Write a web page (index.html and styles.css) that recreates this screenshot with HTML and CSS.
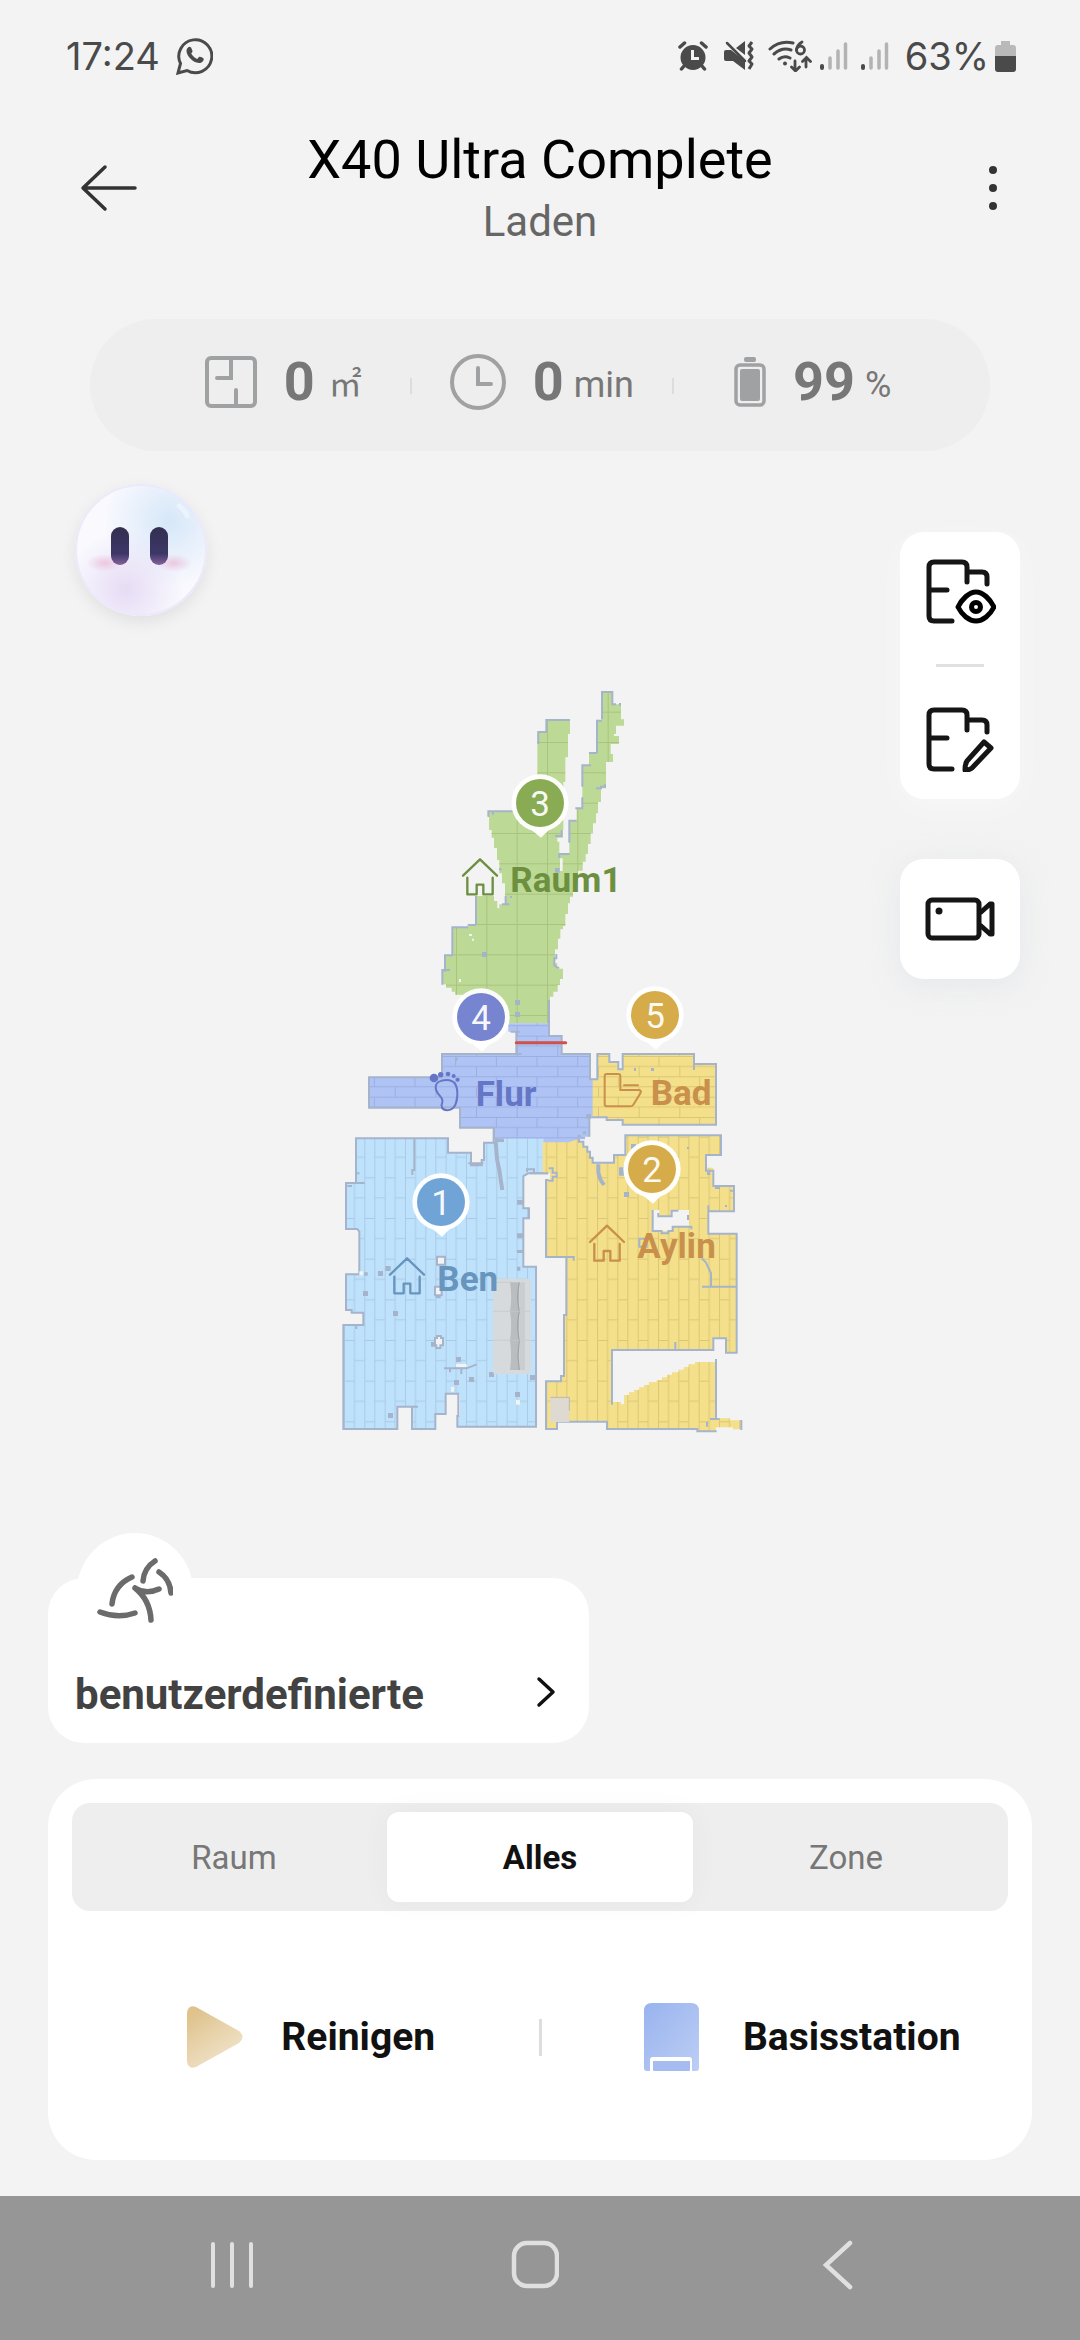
FILE: index.html
```
<!DOCTYPE html>
<html lang="de">
	<head>
		<meta charset="utf-8">
		<meta name="viewport" content="width=device-width">
		<title>X40 Ultra Complete</title>
		<link rel="stylesheet" href="styles.css">
	</head>
	<body>
		<div class="statusBar">
			<span class="time">17:24</span>
			<svg width="37" height="38" viewBox="0 0 37 38" fill="none" stroke="#4a4a4a" stroke-width="3">
				<path d="M2 36l2.500-9.500A16.500 16.500 0 1 1 11 33.500z"/>
				<path d="M12 10.500c1.500-1.500 3-.5 3.500 1l1 2.500c.3 1-.8 1.800-1.300 2.600 1.500 2.700 3.300 4.200 6 5.400l2-2.200c1.200-.7 4.300 1.300 4.500 2 .3 2.300-2.200 4.400-4.600 4.300C16.500 25.600 10.500 18.600 10.500 14c0-1.500.5-2.700 1.500-3.500z" fill="#4a4a4a" stroke="none"/>
			</svg>
			<div class="statusIcons">
				<svg width="30" height="30" viewBox="0 0 30 30">
					<circle cx="15" cy="16.500" r="12.500" fill="#4a4a4a"/>
					<path d="M2 6l4.500-4M28 6l-4.500-4M6 25l-2.500 3M24 25l2.500 3" stroke="#4a4a4a" stroke-width="3.500" stroke-linecap="round"/>
					<path d="M14.500 9v8.500H21" fill="none" stroke="#f3f3f3" stroke-width="3"/>
				</svg>
				<svg class="mute" width="32" height="30" viewBox="0 0 32 30" fill="#4a4a4a">
					<path d="M0 11q0-2 2-2h5l14 11v9L9 20H2q-2 0-2-2zM12 7l9-7v14z"/>
					<path d="M3 2l18 18" stroke="#4a4a4a" stroke-width="2.500" stroke-linecap="round"/>
					<path d="M28 1l-3 4 3 3-3 4 3 4-3 4 3 3-3 5" fill="none" stroke="#4a4a4a" stroke-width="3" stroke-linejoin="round"/>
				</svg>
				<svg class="wifi" width="44" height="32" viewBox="0 0 44 32" fill="none" stroke="#4a4a4a" stroke-width="3" stroke-linecap="round">
					<path d="M2 9Q12 0 25 3M6 14q8-7 17-4M11 19q5-4 11-1"/>
					<circle cx="17" cy="23.500" r="2" fill="#4a4a4a" stroke="none"/>
					<path d="M34 2q-5 3-5.500 8M27 21v9M23.500 27l4 4 4-4M38 27V18M34.500 21.500l4-4 4 4" stroke-width="2.800"/>
					<circle cx="32.500" cy="10" r="4" stroke-width="2.800"/>
				</svg>
				<svg class="signal" width="28" height="30" viewBox="0 0 28 30" stroke="#b3b3b3" stroke-width="4" stroke-linecap="round">
					<path d="M2 25v2" stroke="#4a4a4a"/><path d="M10 17v10M18 10v17M25.500 3v24" stroke-width="3.500"/>
				</svg>
				<svg class="signal second" width="28" height="30" viewBox="0 0 28 30" stroke="#b3b3b3" stroke-width="4" stroke-linecap="round">
					<path d="M2 25v2" stroke="#4a4a4a"/><path d="M10 17v10M18 10v17M25.500 3v24" stroke-width="3.500"/>
				</svg>
				<span class="percent">63%</span>
				<svg width="21" height="31" viewBox="0 0 21 31">
					<path d="M6 0h9v4h3q3 0 3 3v9H0V7q0-3 3-3h3z" fill="#b9b9b9"/>
					<path d="M0 15h21v13q0 3-3 3H3q-3 0-3-3z" fill="#4a4a4a"/>
				</svg>
			</div>
		</div>

		<header class="header">
			<button class="iconButton" aria-label="Zurück">
				<svg width="58" height="48" viewBox="0 0 58 48" fill="none" stroke="#333" stroke-width="3.500" stroke-linecap="round" stroke-linejoin="round">
					<path d="M25 3L3 24l22 21M3 24h52"/>
				</svg>
			</button>
			<div class="title">
				<h1>X40 Ultra Complete</h1>
				<p>Laden</p>
			</div>
			<button class="iconButton right" aria-label="Menü">
				<svg width="10" height="46" viewBox="0 0 10 46" fill="#333">
					<circle cx="5" cy="5" r="4"/><circle cx="5" cy="23" r="4"/><circle cx="5" cy="41" r="4"/>
				</svg>
			</button>
		</header>

		<div class="stats">
			<div class="stat">
				<svg width="52" height="52" viewBox="0 0 52 52" fill="none" stroke="#a0a1a3" stroke-width="4" stroke-linecap="round">
					<rect x="2" y="2" width="48" height="48" rx="4"/>
					<path d="M26 3v19H12M31 49V34"/>
				</svg>
				<b>0</b><span class="area">㎡</span>
			</div>
			<div class="line"></div>
			<div class="stat">
				<svg width="56" height="56" viewBox="0 0 56 56" fill="none" stroke="#a0a1a3" stroke-width="4" stroke-linecap="round">
					<circle cx="28" cy="28" r="26"/>
					<path d="M28 14v16h13"/>
				</svg>
				<b>0</b><span>min</span>
			</div>
			<div class="line"></div>
			<div class="stat battery">
				<svg width="32" height="50" viewBox="0 0 32 50">
					<rect x="10" width="12" height="5" rx="2" fill="#a0a1a3"/>
					<rect x="2" y="8" width="28" height="40" rx="4" fill="none" stroke="#a0a1a3" stroke-width="3.500"/>
					<rect x="6" y="12" width="20" height="32" rx="2" fill="#a0a1a3"/>
				</svg>
				<b>99</b><span>%</span>
			</div>
		</div>

		<main class="stage">
			<button class="avatar" aria-label="Assistent">
				<svg width="132" height="132" viewBox="0 0 132 132">
					<defs>
						<radialGradient id="sky" cx="72%" cy="28%" r="50%"><stop offset="0" stop-color="#d6e7f8"/><stop offset="1" stop-color="#d6e7f8" stop-opacity="0"/></radialGradient>
						<radialGradient id="lilac" cx="38%" cy="80%" r="45%"><stop offset="0" stop-color="#e6dcf5"/><stop offset="1" stop-color="#e6dcf5" stop-opacity="0"/></radialGradient>
						<radialGradient id="blush"><stop offset="0" stop-color="#ecc8e0"/><stop offset="1" stop-color="#ecc8e0" stop-opacity="0"/></radialGradient>
						<linearGradient id="eye" x2="0" y2="1"><stop offset="0" stop-color="#332f50"/><stop offset=".7" stop-color="#3d3768"/><stop offset="1" stop-color="#84629a"/></linearGradient>
					</defs>
					<circle cx="66" cy="66" r="66" fill="#f9f9fe"/>
					<circle cx="66" cy="66" r="65" fill="url(#sky)"/>
					<circle cx="66" cy="66" r="65" fill="url(#lilac)" stroke="#ebe9fa" stroke-width="2"/>
					<path d="M104 22q7 5 8 10" stroke="#fff" stroke-width="5" stroke-linecap="round" fill="none" opacity=".4"/>
					<ellipse cx="30" cy="79" rx="18" ry="9" fill="url(#blush)"/>
					<ellipse cx="99" cy="79" rx="18" ry="9" fill="url(#blush)"/>
					<rect x="36" y="43" width="18" height="38" rx="9" fill="url(#eye)"/>
					<rect x="75" y="43" width="18" height="38" rx="9" fill="url(#eye)"/>
				</svg>
			</button>

			<svg class="map" viewBox="0 0 1260 2280">
				<defs>
					<pattern id="tiles" width="91" height="91" patternUnits="userSpaceOnUse" x="17" y="34">
						<path d="M0 1.500h91M1.500 0v91" stroke="#aac37f" stroke-width="3"/>
					</pattern>
					<pattern id="planks" width="61" height="122" patternUnits="userSpaceOnUse" x="11" y="50">
						<path d="M1.500 0v122M31.500 0v122M0 1.500h31M31 62h30" stroke="#5d7590" stroke-opacity=".22" stroke-width="3"/>
					</pattern>
					<pattern id="planksYellow" width="61" height="122" patternUnits="userSpaceOnUse" x="18" y="50">
						<path d="M1.500 0v122M31.500 0v122M0 1.500h31M31 62h30" stroke="#d3c172" stroke-opacity=".8" stroke-width="3"/>
					</pattern>
					<pattern id="bricks" width="122" height="61" patternUnits="userSpaceOnUse" x="42" y="45">
						<path d="M0 1.500h122M0 31.500h122M1.500 31v30M61 0v31" stroke="#8f9fd5" stroke-opacity=".6" stroke-width="3"/>
					</pattern>
					<pattern id="bricksYellow" width="122" height="61" patternUnits="userSpaceOnUse" x="42" y="45">
						<path d="M0 1.500h122M0 31.500h122M1.500 31v30M61 0v31" stroke="#d3c172" stroke-opacity=".8" stroke-width="3"/>
					</pattern>
					<path id="raum" d="M204 423H290L352 400V186H378V150H450V192H444V262H436V336H430V480H428V503H412V515H418V551H448V452H470V415H487V286H507V249H531V150H546V66H577V103H603V148H612V167H588V192H582V198H597V222H572V252H579V276H558V355H543V396H534V430H528V460H519V490H512V522H504V552H497V575H488V602H474V640H459V680H450V700H444V732H436V768H429V778H421V806H414V838H405V880H412V896H429V927H420V945H413V965H400V980H390V1060H200V990H135V974H105V965H95V953H78V943H66V900H75V856H97V772H145V765H168V678H222V693H232V715H238V703H255V640H246V610H238V570H231V534H222V503H215V480H207V440H204Z"/>
					<path id="flur" d="M505 130H625V168H665V222H750V298H760V408H748V470H735V478H715L685 487H610V476H462V443H360V383H87V292H306V222H529V155H505Z"/>
					<path id="bad" d="M772 298V222H810V246H835V268H848V222H1062V252H1128V434H848V420H800V412H758V298Z"/>
					<path id="ben" d="M108 55H384V98H453V136H485V120H492V68H521V50H570V55H670V160H625L612 168V265H627V295H610V440H648V920H412V888H420V821H377V882H346V927H276V860H232V927H70V615H130V578H95V570H78V463H118V335L112 327H78V189H108Z"/>
					<path id="aylin" d="M38 66H112L130 52H147V65H160V80H172V95H180V113H188V128H252V105H286V46H573V105H528V143H550V198H612V274H535V341H620V698H588V655H550V690H246V846H273V853H282V825H297V817H312V810H327V802H342V795H357V786H380V780H396V772H411V764H426V757H446V749H461V741H476V733H495V726H558V895H600V901H636V928H609V922H558V934H502V927H231V905H81V927H48V784H93V768H102V585H109V411H48V180H60V158H38Z"/>
					<g id="house" fill="none" stroke-width="7" stroke-linecap="round" stroke-linejoin="round">
						<path d="M-51 49L0 0l51 49M-38 55v50h28V76h20v29h28V55"/>
					</g>
					<g id="pin">
						<path d="M-32 76L3 104 32 76z"/>
						<circle r="86"/>
					</g>
				</defs>

				<!-- Raum1 -->
				<g transform="translate(270 -30)">
					<use href="#raum" fill="#bcd995"/>
					<use href="#raum" fill="url(#tiles)"/>
					<path class="wall" d="M355 222V186H379V150H450M205 440V424H290M219 424v10M546 148V66H577V103H588M600 99v8M531 249V152H546M507 249H531M487 350V286H513M528 355H543V350H555V343M466 415H487V382M448 518V452H470M418 563V552H449M405 498H425V480M168 765V678M143 765H168M97 856V772H145M75 905V856H99M67 944V900H90M387 990V1060M409 852V865H403V886L412 893H418M246 703H268M257 703V678M237 598h8M270 681h6"/>
					<path class="speck" d="M186 846h15v15h-15zM285 990h15v15h-15zM285 1026h15v15h-15zM405 594h14v14h-14z"/>
					<path d="M420 565h8v38h-8zM147 792h9v6h-9zM156 806h6v6h-6zM117 927h6v9h-6z" fill="#f3f3f3"/>
				</g>

				<!-- Ben -->
				<g transform="translate(-30 1320)">
					<use href="#ben" fill="#bfe2fc"/>
					<use href="#ben" fill="url(#planks)"/>
					<path class="wall" d="M521 25V68H492V120H485V136H453V98H384V55H108V189H78V327H112L118 335V463H78V570H95V578H130V615H70V927H232V860H276V927H346V882H377V821H415V888H412V920H648V440H610V295H627V265H610V168L625 160H684M108 189H134M276 860H294M283 55V150H277V165M372 745H440L470 733M390 745V757M424 745V762M78 463H100M445 130H490M109 615v12M108 160h10M82 198h14M621 155V148H642V160"/>
					<path class="wall thick" d="M527 65L531 118L538 150L543 185L547 210M524 38L530 60H552"/>
					<path class="speck" d="M174 453h15v15h-15zM196 438h16v15h-16zM129 513h15v15h-15zM219 573h15v15h-15zM408 711h15v15h-15zM447 771h15v15h-15zM402 780h15v15h-15zM585 816h15v15h-15zM507 756h15v15h-15zM630 765h17v15h-17zM204 879h15v15h-15zM591 240h18v14h-18zM591 340h18v14h-18zM591 390h18v9h-18zM591 440h10v12h-10zM133 457h10v10h-10zM333 666h12v14h-12zM348 526h14v9h-14z"/>
					<path d="M351 410h24v24h-24zM345 500h20v26h-20zM351 648h12v6h6v22h-8v8h-12v-8h-4v-22h6z" fill="#f3f3f3" class="wall"/>
					<path d="M408 732h32v9h-32zM393 801h9v14h-9zM588 840h12v14h-12zM118 454h11v12h-11z" fill="#f3f3f3"/>
					<rect x="519" y="476" width="114" height="286" rx="6" fill="#d7dadc"/>
					<path d="M570 487H598V750H570Q576 705 570 662 577 615 570 574 577 530 570 487z" fill="#b9bdc0"/>
					<path d="M598 487q-10 45 0 87 -10 45 0 88 -9 45 0 88" fill="none" stroke="#9a9fa3" stroke-width="3"/>
					<path d="M519 574h112M519 661h112M522 487h76" stroke="#c4c8ca" stroke-width="2"/>
					<rect x="600" y="487" width="15" height="263" fill="#cbced0"/>
				</g>

				<!-- Aylin -->
				<g transform="translate(600 1320)">
					<use href="#aylin" fill="#f4e08a"/>
					<use href="#aylin" fill="url(#planksYellow)"/>
					<path class="wall" d="M147 55V65H160V80H172V95H180V113H188V128H252V105H286V46H573V105H528V152H550V198H612V274H535V256M535 274V341H620V698H588V655H550V690H246V854M436 690V666M558 717V896M540 897H568M634 900V930M560 934H502V927H231V905H81V927H48V784H93V768H102V585H109V411H48V180H56M109 411H131V422M516 500H620M543 500V460L528 428 516 415M555 204H570M600 212H612M0 160H55M56 145H68V158H80V170H68V182H56M531 905v15"/>
					<path class="wall thick" d="M205 133V158L212 180 222 195"/>
					<path class="speck" d="M282 216h15v15h-15zM303 72h15v15h-15zM267 142h15v25h-15zM471 81h6v6h-6zM585 255h6v6h-6zM531 155h10v10h-10z"/>
					<path d="M368 270H388V290H425V270H477V320H428V333H368z" fill="#f3f3f3"/>
					<path class="wall" d="M368 270V333H395V340H415V333H428V320H484V328M385 279V289H425V272H445M474 285V300M328 356h22v24h-22z"/>
					<rect x="61" y="832" width="57" height="74" fill="#dedad2"/>
					<path d="M61 832h57v40" fill="none" stroke="#bcb7ab" stroke-width="3"/>
				</g>

				<!-- Flur, Bad -->
				<g transform="translate(30 900)">
					<use href="#flur" fill="#afc4f5"/>
					<use href="#flur" fill="url(#bricks)"/>
					<use href="#bad" fill="#f4e08a"/>
					<use href="#bad" fill="url(#bricksYellow)"/>
					<path class="wall" d="M627 60V168H665V222H750V298H772V222H808V246H835V268H848V222H1062V270M1062 252H1128V434H848V420H800V412H748V470M540 155H512M529 155V222M545 222H306V292H87V383H360V443H462V476M350 232v10"/>
					<path class="speck" d="M933 264h9v9h-9zM882 264h6v9h-6zM729 454h9v9h-9zM713 464h9v9h-9zM738 402h15v14h-15z"/>
					<path d="M529 188H677" stroke="#cf5148" stroke-width="9" stroke-linecap="round"/>
				</g>

				<g class="label" fill="#6d8f40" stroke="#6d8f40" transform="translate(450 538)">
					<use href="#house"/><text x="91" y="97">Raum1</text>
				</g>
				<g class="label" fill="#6795bd" stroke="#6795bd" transform="translate(231 1735)">
					<use href="#house"/><text x="91" y="97">Ben</text>
				</g>
				<g class="label" fill="#c8904c" stroke="#c8904c" transform="translate(831 1637)">
					<use href="#house"/><text x="91" y="97">Aylin</text>
				</g>
				<g class="label" fill="#6676c7" stroke="#6676c7" transform="translate(30 900)">
					<path d="M320 300C345 300 353 318 352 345C352 365 345 390 322 391C304 390 302 378 307 366C312 352 288 345 287 322C287 307 302 300 320 300z" fill="none" stroke-width="6"/>
					<g stroke="none"><circle cx="282" cy="294" r="13"/><circle cx="302" cy="284" r="8"/><circle cx="324" cy="282" r="7"/><circle cx="341" cy="288" r="6"/><circle cx="353" cy="299" r="6"/></g>
					<text x="407" y="377">Flur</text>
				</g>
				<g class="label" fill="#c8904c" stroke="#c8904c" transform="translate(30 900)">
					<path d="M800 282H835Q841 282 841 288V330H897Q905 331 902 338L880 374Q877 379 870 379H800Q794 379 794 373V288Q794 282 800 282zM852 316H894" fill="none" stroke-width="6" stroke-linecap="round"/>
					<text x="932" y="375">Bad</text>
				</g>

				<g class="pin" transform="translate(630 369)"><use href="#pin"/><circle r="72" fill="#83a74b"/><text y="38">3</text></g>
				<g class="pin" transform="translate(453 1011)"><use href="#pin"/><circle r="72" fill="#707dcc"/><text y="38">4</text></g>
				<g class="pin" transform="translate(975 1005)"><use href="#pin"/><circle r="72" fill="#d4a63f"/><text y="38">5</text></g>
				<g class="pin" transform="translate(333 1566)"><use href="#pin"/><circle r="72" fill="#689fd5"/><text y="38">1</text></g>
				<g class="pin" transform="translate(966 1467)"><use href="#pin"/><circle r="72" fill="#d4a63f"/><text y="38">2</text></g>
			</svg>

			<div class="tools">
				<div class="toolGroup">
					<button aria-label="Karte anzeigen">
						<svg width="72" height="66" viewBox="0 0 72 66" fill="none" stroke="#151515" stroke-width="5" stroke-linecap="round" stroke-linejoin="round">
							<path d="M28 62H10q-5 0-5-5V8q0-5 5-5h28q5 0 5 5v15M43 13h15q5 0 5 5v7M6 31h17"/>
							<path d="M34 48C38 40 45 33 52 33S66 40 70 48C66 56 59 62 52 62S38 56 34 48z" stroke="#000"/>
							<circle cx="52" cy="48" r="4.500" stroke="#000"/>
						</svg>
					</button>
					<hr>
					<button aria-label="Karte bearbeiten">
						<svg width="72" height="66" viewBox="0 0 72 66" fill="none" stroke="#151515" stroke-width="5" stroke-linecap="round" stroke-linejoin="round">
							<path d="M28 63H10q-5 0-5-5V9q0-5 5-5h28q5 0 5 5v15M43 14h15q5 0 5 5v7M6 32h17"/>
							<path d="M60 36l7 6-19 20q-2 2-7 2 0-6 2-9z"/>
						</svg>
					</button>
				</div>
				<div class="toolGroup camera">
					<button aria-label="Kamera">
						<svg width="70" height="44" viewBox="0 0 70 44" fill="none" stroke="#151515" stroke-width="5" stroke-linejoin="round">
							<rect x="3" y="3" width="51" height="38" rx="4"/>
							<path d="M55 16l10-9h2v30h-2l-10-9"/>
							<circle cx="14" cy="14" r="3.500" fill="#151515" stroke="none"/>
						</svg>
					</button>
				</div>
			</div>
		</main>

		<button class="mode">
			<span class="modeIcon">
				<svg width="76" height="66" viewBox="0 0 76 66" fill="none" stroke="#6b6b6b" stroke-width="5.500" stroke-linecap="round">
					<path d="M35 19Q17 27 15 46M3 54q18 7 35 1M58 3Q47 10 46 23M62 14q11 7 12 21M38 30q11 7 24 1M38 30q15 12 16 32"/>
				</svg>
			</span>
			<span>benutzerdefinierte</span>
			<svg width="20" height="32" viewBox="0 0 20 32" fill="none" stroke="#111" stroke-width="3.500" stroke-linecap="round" stroke-linejoin="round">
				<path d="M3 3l14 13L3 29"/>
			</svg>
		</button>

		<section class="panel">
			<div class="tabs">
				<button>Raum</button>
				<button class="active">Alles</button>
				<button>Zone</button>
			</div>
			<div class="actions">
				<button class="clean">
					<svg width="56" height="62" viewBox="0 0 56 62">
						<defs><linearGradient id="gold" x1=".1" y1=".1" x2=".6" y2=".9"><stop offset="0" stop-color="#dfc28c"/><stop offset="1" stop-color="#efe1c6"/></linearGradient></defs>
						<path d="M0 7Q1-2 9 1L52 25q7 6 0 12L9 61Q1 64 0 55z" fill="url(#gold)"/>
					</svg>
					Reinigen
				</button>
				<div class="actionLine"></div>
				<button class="dock">
					<svg width="56" height="68" viewBox="0 0 56 68">
						<defs><linearGradient id="dock" x2="1" y2="1"><stop offset="0" stop-color="#98b3ee"/><stop offset="1" stop-color="#bdcef5"/></linearGradient></defs>
						<path d="M1 8q0-8 8-8h39q8 0 8 8v57q0 3-3 3H4q-3 0-3-3z" fill="url(#dock)"/>
						<path d="M7 68V57q0-3 3-3h36q3 0 3 3v11z" fill="#fff"/>
						<path d="M10 67v-9h37v9q0 1-1 1H11q-1 0-1-1z" fill="#a6bcf0"/>
					</svg>
					Basisstation
				</button>
			</div>
		</section>

		<nav class="navBar">
			<button aria-label="Letzte Apps">
				<svg width="48" height="52" viewBox="0 0 48 52" stroke="#e0e0e0" stroke-width="4" stroke-linecap="round"><path d="M5 5v42M24 5v42M43 5v42"/></svg>
			</button>
			<button aria-label="Startseite">
				<svg width="48" height="52" viewBox="0 0 48 52" fill="none" stroke="#e0e0e0" stroke-width="4.500"><rect x="3" y="4" width="43" height="43" rx="13"/></svg>
			</button>
			<button aria-label="Zurück">
				<svg width="48" height="52" viewBox="0 0 48 52" fill="none" stroke="#e0e0e0" stroke-width="4.500" stroke-linecap="round"><path d="M36 4L12 26l24 22"/></svg>
			</button>
		</nav>
	</body>
</html>
```
FILE: styles.css
```
* {
	box-sizing: border-box;
}

body {
	margin: 0;
	min-height: 100vh;
	display: flex;
	flex-direction: column;
	background: #f3f3f3;
	color: #111;
	font-family: Roboto, "Noto Sans CJK SC", sans-serif;
}

button {
	margin: 0;
	padding: 0;
	border: 0;
	background: none;
	color: inherit;
	font: inherit;
}

svg {
	display: block;
	flex: none;
}

.statusBar {
	display: flex;
	align-items: center;
	gap: 16px;
	height: 112px;
	padding: 0 64px 0 66px;
	color: #4a4a4a;
	font-family: Inter, sans-serif;
	font-size: 38px;
}

.statusIcons {
	display: flex;
	align-items: center;
	margin-left: auto;
}

.mute {
	margin-left: 16px;
}

.wifi {
	margin-left: 12px;
}

.signal {
	margin-left: 8px;
}

.second {
	margin-left: 13px;
}

.percent {
	margin: 0 6px 0 16px;
}

.header {
	display: flex;
	align-items: center;
	padding: 16px 80px 0;
}

.iconButton {
	width: 60px;
	height: 60px;
}

.iconButton.right {
	display: flex;
	align-items: center;
	justify-content: flex-end;
	padding-right: 2px;
}

.title {
	flex: 1;
	text-align: center;
}

.title h1 {
	margin: 0;
	color: #000;
	font-size: 54px;
	line-height: 64px;
	font-weight: 400;
}

.title p {
	margin: 5px 0 0;
	color: #666;
	font-size: 42px;
	line-height: 50px;
}

.stats {
	display: flex;
	align-items: center;
	justify-content: center;
	gap: 38px;
	height: 132px;
	margin: 72px 90px 0;
	padding: 0 0 6px 16px;
	border-radius: 66px;
	background: #eee;
	color: #777;
}

.stat {
	display: flex;
	align-items: center;
	font-size: 36px;
	line-height: 64px;
}

.stat b {
	margin: 0 10px 0 27px;
	font-size: 54px;
}

.stat span {
	padding-top: 6px;
}

.stat .area {
	margin: 0 10px 0 4px;
	font-size: 33px;
}

.battery {
	padding-left: 22px;
}

.line {
	width: 2px;
	height: 16px;
	margin-top: 8px;
	background: #ddd;
}

.stage {
	flex: 1;
	display: grid;
	grid-template-columns: 1fr 420px 1fr;
	align-items: start;
	padding: 33px 60px 0;
}

.avatar {
	width: 132px;
	margin-left: 15px;
	border-radius: 50%;
	box-shadow: 0 6px 16px rgba(0, 0, 0, .08);
}

.map {
	width: 420px;
	height: 760px;
	margin-top: 196px;
}

.wall {
	stroke: #a5b4cb;
	stroke-width: 6;
}

path.wall:not([fill]) {
	fill: none;
}

.thick {
	stroke-width: 12;
}

.speck {
	fill: #a5b4cb;
}

.label text {
	stroke: none;
	font-size: 105px;
	font-weight: 700;
}

.pin {
	fill: #fff;
	fill-opacity: .95;
}

.pin text {
	fill: #fff;
	font-size: 105px;
	text-anchor: middle;
}

.tools {
	display: flex;
	flex-direction: column;
	gap: 60px;
	width: 120px;
	margin-top: 48px;
	justify-self: end;
}

.toolGroup {
	display: flex;
	flex-direction: column;
	align-items: center;
	border-radius: 24px;
	background: #fff;
	box-shadow: 0 8px 32px rgba(255, 255, 255, .4);
}

.toolGroup button {
	display: flex;
	align-items: center;
	justify-content: center;
	width: 120px;
	height: 120px;
}

.toolGroup hr {
	width: 48px;
	height: 3px;
	margin: 12px 0;
	border: 0;
	background: #e0e0e0;
}

.camera {
	box-shadow: 0 6px 30px rgba(200, 205, 220, .3);
}

.mode {
	position: relative;
	display: flex;
	align-items: flex-end;
	justify-content: space-between;
	width: 50%;
	min-width: 541px;
	height: 165px;
	margin: 0 48px;
	padding: 0 33px 24px 27px;
	border-radius: 36px;
	background: #fff;
	color: #424242;
	font-size: 42px;
	line-height: 48px;
	font-weight: 700;
	align-self: flex-start;
}

.mode > svg {
	margin-bottom: 11px;
}

.modeIcon {
	position: absolute;
	left: 29px;
	top: -45px;
	display: flex;
	align-items: center;
	justify-content: center;
	width: 116px;
	height: 116px;
	border-radius: 50%;
	background: #fff;
}

.panel {
	height: 381px;
	margin: 36px 48px;
	padding: 24px;
	border-radius: 48px;
	background: #fff;
}

.tabs {
	display: flex;
	height: 108px;
	padding: 9px;
	border-radius: 18px;
	background: #eee;
	color: #777;
	font-size: 33px;
}

.tabs button {
	flex: 1;
	border-radius: 12px;
}

.tabs .active {
	background: #fff;
	box-shadow: 0 0 30px rgba(0, 0, 0, .04);
	color: #111;
	font-weight: 700;
}

.actions {
	display: grid;
	grid-template-columns: 1fr 3px 1fr;
	align-items: center;
	height: 252px;
	font-size: 39px;
	font-weight: 700;
}

.actions button {
	display: flex;
	align-items: center;
	justify-content: center;
	gap: 38px;
}

.actions .clean {
	padding-left: 12px;
}

.actions .dock {
	gap: 44px;
	padding-left: 54px;
}

.actionLine {
	height: 37px;
	background: #ddd;
}

.navBar {
	display: flex;
	align-items: center;
	justify-content: space-between;
	height: 144px;
	padding: 0 218px 6px 208px;
	background: #969696;
}
```
